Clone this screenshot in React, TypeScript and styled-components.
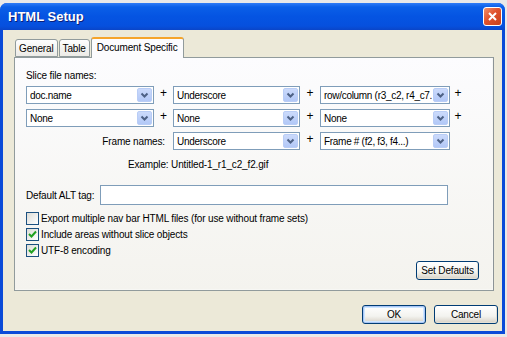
import React, { FC } from 'react';
import styled, { createGlobalStyle } from 'styled-components';

const GlobalStyle = createGlobalStyle`
  html, body {
    margin: 0;
    padding: 0;
    background: #e9e9e9;
  }
  body {
    font-family: "Liberation Sans", Arial, sans-serif;
    font-size: 10px;
    letter-spacing: -0.15px;
    color: #000;
  }
`;

const Window = styled.div`
  margin-top: 3px;
  width: 505px;
  height: 331px;
  box-sizing: border-box;
  display: flex;
  flex-direction: column;
  background: #0a4ad8;
  border-radius: 7px 7px 0 0;
  padding: 0 3px 3px 3px;
  overflow: hidden;
`;

const TitleBar = styled.div`
  height: 27px;
  display: flex;
  align-items: center;
  justify-content: space-between;
  background: linear-gradient(#2f7cf7 0%, #0a5fe8 15%, #0554e2 50%, #0650de 85%, #0a45c8 100%);
  margin: 0 -3px;
  padding-left: 8px;
  padding-right: 3px;
`;

const Title = styled.span`
  color: #fff;
  font-weight: bold;
  font-size: 13px;
  letter-spacing: 0;
  text-shadow: 1px 1px 0 #0a1e7a;
`;

const CloseButton = styled.div`
  width: 19px;
  height: 19px;
  box-sizing: border-box;
  border: 1px solid #fff;
  border-radius: 3px;
  background: linear-gradient(135deg, #f0906a 0%, #e0522d 45%, #c8401a 100%);
  display: flex;
  align-items: center;
  justify-content: center;
`;

const Body = styled.div`
  flex: 1;
  background: #ece9d8;
  display: flex;
  flex-direction: column;
  padding: 9px 8px 0 11px;
`;

const TabStrip = styled.div`
  display: flex;
  align-items: flex-end;
  height: 18px;
  padding-left: 1px;
  position: relative;
  z-index: 1;
`;

const Tab = styled.div<{ $active?: boolean }>`
  box-sizing: border-box;
  height: ${(p) => (p.$active ? '21px' : '18px')};
  margin-bottom: ${(p) => (p.$active ? '-1px' : '0')};
  padding: ${(p) => (p.$active ? '3px 5px 0' : '3px 3px 0')};
  margin-right: 1px;
  border: 1px solid #919b9c;
  border-bottom: ${(p) => (p.$active ? 'none' : '1px solid #919b9c')};
  border-radius: 3px 3px 0 0;
  background: ${(p) => (p.$active ? '#fcfcfe' : 'linear-gradient(#fefefe, #ecebe6)')};
  border-top: ${(p) => (p.$active ? '2px solid #f5a42a' : '1px solid #919b9c')};
  white-space: nowrap;
`;

const Panel = styled.div`
  box-sizing: border-box;
  width: 480px;
  height: 234px;
  border: 1px solid #919b9c;
  border-right-color: #8c9396;
  box-shadow: inset -1px -1px 0 #f7f7f4;
  background: linear-gradient(#fcfcfe 0%, #f4f3ee 100%);
  padding: 12px 0 0 11px;
  display: flex;
  flex-direction: column;
`;

const SectionLabel = styled.div`
  height: 13px;
  margin-bottom: 3px;
`;

const NameGrid = styled.div`
  display: grid;
  grid-template-columns: 128px 19px 127px 20px 130px 16px;
  grid-auto-rows: 18px;
  row-gap: 5px;
  align-items: center;
`;

const Plus = styled.span<{ $hidden?: boolean }>`
  text-align: center;
  font-size: 12px;
  visibility: ${(p) => (p.$hidden ? 'hidden' : 'visible')};
  line-height: 12px;
  align-self: start;
  padding-top: 1px;
`;

const FieldLabel = styled.span`
  grid-column: 1 / span 2;
  text-align: right;
  padding-right: 8px;
  white-space: nowrap;
`;

const SelectBox = styled.div`
  box-sizing: border-box;
  height: 18px;
  border: 1px solid #7f9db9;
  background: #fff;
  display: flex;
  align-items: center;
  padding-left: 3px;
`;

const SelectText = styled.span`
  flex: 1;
  white-space: nowrap;
  overflow: hidden;
  letter-spacing: -0.3px;
`;

const ArrowButton = styled.span`
  width: 15px;
  height: 14px;
  margin-right: 1px;
  box-sizing: border-box;
  border: 1px solid #b9cdf6;
  border-radius: 2px;
  background: linear-gradient(#cbdafb, #b2c8f7);
  display: flex;
  align-items: center;
  justify-content: center;
`;

const Example = styled.div`
  margin: 9px 0 0 102px;
  height: 13px;
`;

const AltRow = styled.div`
  display: flex;
  align-items: center;
  margin-top: 13px;
`;

const AltLabel = styled.span`
  width: 74px;
  white-space: nowrap;
`;

const TextInput = styled.div`
  box-sizing: border-box;
  width: 348px;
  height: 20px;
  border: 1px solid #7f9db9;
  background: #fff;
`;

const CheckList = styled.div`
  display: flex;
  flex-direction: column;
  gap: 3px;
  margin-top: 7px;
`;

const CheckRow = styled.div`
  display: flex;
  align-items: center;
  height: 13px;
  white-space: nowrap;
`;

const Box = styled.span`
  box-sizing: border-box;
  width: 13px;
  height: 13px;
  border: 1px solid #1c5180;
  background: linear-gradient(135deg, #dcdcd7 0%, #fff 100%);
  margin-right: 2px;
  display: flex;
  align-items: center;
  justify-content: center;
`;

const PanelFooter = styled.div`
  display: flex;
  justify-content: flex-end;
  padding-right: 14px;
  margin-top: 4px;
`;

const Button = styled.div<{ $default?: boolean; $width: number }>`
  box-sizing: border-box;
  width: ${(p) => p.$width}px;
  height: 19px;
  border: 1px solid #003c74;
  border-radius: 3px;
  background: linear-gradient(#fff 0%, #f3f3ef 60%, #d6d0c5 100%);
  box-shadow: ${(p) =>
    p.$default ? 'inset 0 0 0 1px #a9c6f6, inset 0 0 0 2px #cee7ff' : 'inset -1px -1px 0 #e3e0d6'};
  display: flex;
  align-items: center;
  justify-content: center;
  white-space: nowrap;
`;

const DialogFooter = styled.div`
  display: flex;
  justify-content: flex-end;
  gap: 8px;
  padding-top: 14px;
  margin-right: -4px;
`;

const Chevron: FC = () => (
  <svg width="9" height="7" viewBox="0 0 9 7">
    <path d="M1.5 1.5 L4.5 4.5 L7.5 1.5" fill="none" stroke="#4d6185" strokeWidth="2" />
  </svg>
);

const Select: FC<{ value: string }> = ({ value }) => (
  <SelectBox>
    <SelectText>{value}</SelectText>
    <ArrowButton>
      <Chevron />
    </ArrowButton>
  </SelectBox>
);

const Check: FC<{ checked?: boolean; label: string }> = ({ checked, label }) => (
  <CheckRow>
    <Box>
      {checked && (
        <svg width="9" height="9" viewBox="0 0 9 9">
          <path d="M1 4 L3.5 6.5 L8 1.5" fill="none" stroke="#21a121" strokeWidth="2" />
        </svg>
      )}
    </Box>
    {label}
  </CheckRow>
);

const App: FC = () => (
  <>
    <GlobalStyle />
    <Window>
      <TitleBar>
        <Title>HTML Setup</Title>
        <CloseButton>
          <svg width="11" height="11" viewBox="0 0 11 11">
            <path d="M2 2 L9 9 M9 2 L2 9" stroke="#fff" strokeWidth="2" />
          </svg>
        </CloseButton>
      </TitleBar>
      <Body>
        <TabStrip>
          <Tab>General</Tab>
          <Tab>Table</Tab>
          <Tab $active>Document Specific</Tab>
        </TabStrip>
        <Panel>
          <SectionLabel>Slice file names:</SectionLabel>
          <NameGrid>
            <Select value="doc.name" />
            <Plus>+</Plus>
            <Select value="Underscore" />
            <Plus>+</Plus>
            <Select value="row/column (r3_c2, r4_c7." />
            <Plus>+</Plus>

            <Select value="None" />
            <Plus>+</Plus>
            <Select value="None" />
            <Plus>+</Plus>
            <Select value="None" />
            <Plus>+</Plus>

            <FieldLabel>Frame names:</FieldLabel>
            <Select value="Underscore" />
            <Plus>+</Plus>
            <Select value="Frame # (f2, f3, f4...)" />
            <Plus $hidden>+</Plus>
          </NameGrid>
          <Example>Example: Untitled-1_r1_c2_f2.gif</Example>
          <AltRow>
            <AltLabel>Default ALT tag:</AltLabel>
            <TextInput />
          </AltRow>
          <CheckList>
            <Check label="Export multiple nav bar HTML files (for use without frame sets)" />
            <Check checked label="Include areas without slice objects" />
            <Check checked label="UTF-8 encoding" />
          </CheckList>
          <PanelFooter>
            <Button $width={63}>Set Defaults</Button>
          </PanelFooter>
        </Panel>
        <DialogFooter>
          <Button $default $width={64}>OK</Button>
          <Button $width={64}>Cancel</Button>
        </DialogFooter>
      </Body>
    </Window>
  </>
);

export default App;
